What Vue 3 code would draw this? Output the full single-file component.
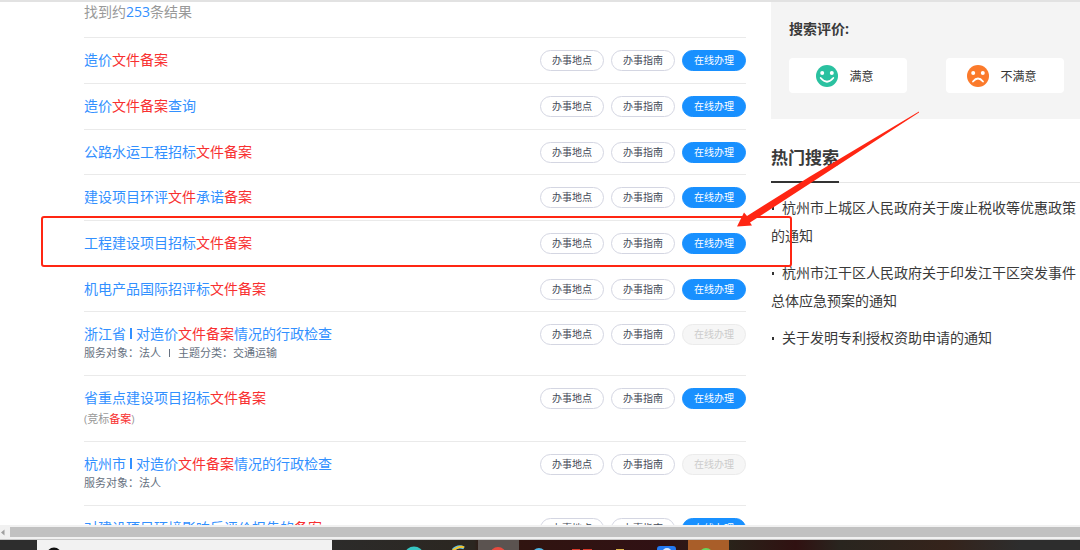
<script setup>
import { ref } from 'vue'

const mark = (text, hit = false) => ({ text, hit })

const results = [
  { title: [mark('造价'), mark('文件备案', true)], online: true },
  { title: [mark('造价'), mark('文件备案', true), mark('查询')], online: true },
  { title: [mark('公路水运工程招标'), mark('文件备案', true)], online: true },
  { title: [mark('建设项目环评'), mark('文件', true), mark('承诺'), mark('备案', true)], online: true },
  { title: [mark('工程建设项目招标'), mark('文件备案', true)], online: true, boxed: true },
  { title: [mark('机电产品国际招评标'), mark('文件备案', true)], online: true },
  {
    region: '浙江省',
    title: [mark('对造价'), mark('文件备案', true), mark('情况的行政检查')],
    meta: ['服务对象：法人', '主题分类：交通运输'],
    online: false
  },
  {
    title: [mark('省重点建设项目招标'), mark('文件备案', true)],
    alias: [mark('(竞标'), mark('备案', true), mark(')')],
    online: true
  },
  {
    region: '杭州市',
    title: [mark('对造价'), mark('文件备案', true), mark('情况的行政检查')],
    meta: ['服务对象：法人'],
    online: false
  },
  { title: [mark('对建设项目环境影响后评价报告的'), mark('备案', true)], online: true }
]

const hot = ref([
  '杭州市上城区人民政府关于废止税收等优惠政策的通知',
  '杭州市江干区人民政府关于印发江干区突发事件总体应急预案的通知',
  '关于发明专利授权资助申请的通知'
])
</script>

<template>
  <div class="page">
    <main class="content">
      <section class="results">
        <p class="count">找到约<span>253</span>条结果</p>
        <ul class="list">
          <li v-for="(r, i) in results" :key="i" :class="['row', { tall: r.meta, wide: r.alias }]">
            <div class="info">
              <a class="title" href="#">
                <template v-if="r.region">{{ r.region }}<i class="bar"></i></template><span v-for="(t, k) in r.title" :key="k" :class="{ hit: t.hit }">{{ t.text }}</span>
              </a>
              <p v-if="r.meta" class="meta">
                <template v-for="(m, k) in r.meta" :key="k"><i v-if="k" class="bar"></i>{{ m }}</template>
              </p>
              <p v-if="r.alias" class="alias"><span v-for="(t, k) in r.alias" :key="k" :class="{ hit: t.hit }">{{ t.text }}</span></p>
            </div>
            <div class="actions">
              <button type="button">办事地点</button>
              <button type="button">办事指南</button>
              <button type="button" class="online" :disabled="!r.online">在线办理</button>
            </div>
            <div v-if="r.boxed" class="highlight"></div>
          </li>
        </ul>
      </section>

      <aside class="side">
        <section class="rating">
          <h2>搜索评价:</h2>
          <div class="choices">
            <button type="button">
              <svg viewBox="0 0 22 22" aria-hidden="true">
                <circle cx="11" cy="11" r="11" fill="#2ac1a0" />
                <circle cx="6.2" cy="8" r="2" fill="#fff" />
                <circle cx="15.8" cy="8" r="2" fill="#fff" />
                <path d="M4.7 13Q11 20.5 17.3 13" fill="none" stroke="#fff" stroke-width="1.8" stroke-linecap="round" />
              </svg>
              满意
            </button>
            <button type="button">
              <svg viewBox="0 0 22 22" aria-hidden="true">
                <circle cx="11" cy="11" r="11" fill="#fb7a2b" />
                <circle cx="6.2" cy="8" r="2" fill="#fff" />
                <circle cx="15.8" cy="8" r="2" fill="#fff" />
                <path d="M6 16.500Q11 10.500 16 16.500" fill="none" stroke="#fff" stroke-width="1.8" stroke-linecap="round" />
              </svg>
              不满意
            </button>
          </div>
        </section>
        <section class="hot">
          <header><h2>热门搜索</h2></header>
          <ul>
            <li v-for="h in hot" :key="h"><a href="#">{{ h }}</a></li>
          </ul>
        </section>
      </aside>
    </main>

    <svg class="arrow" viewBox="0 0 184 116" aria-hidden="true">
      <path d="M183 0.500L74 65.500L11 105L8 101.500L1 115.500L16 114.500L14 111.500L74 72.500L183 1.500Z" fill="#ff2613" />
    </svg>

    <div class="scrollbar">
      <svg viewBox="0 0 10 11" aria-hidden="true"><path d="M4.500 2.500V8.500L1 5.500Z" fill="#a0a0a0" /></svg>
      <div class="thumb"></div>
    </div>
    <footer class="taskbar">
      <div class="searchbox">
        <svg viewBox="0 0 20 10" aria-hidden="true"><circle cx="9" cy="15" r="6" fill="none" stroke="#111" stroke-width="3" /></svg>
      </div>
      <svg class="apps" viewBox="0 0 748 10" preserveAspectRatio="xMinYMin slice" aria-hidden="true">
        <defs>
          <linearGradient id="desk">
            <stop offset="0" stop-color="#2c2b2a" />
            <stop offset=".19" stop-color="#2b2620" />
            <stop offset=".2" stop-color="#30150f" />
            <stop offset=".44" stop-color="#301114" />
            <stop offset=".53" stop-color="#29231a" />
            <stop offset=".62" stop-color="#301111" />
            <stop offset=".68" stop-color="#29251f" />
            <stop offset=".82" stop-color="#35231b" />
            <stop offset=".92" stop-color="#2d2d2d" />
          </linearGradient>
        </defs>
        <rect width="748" height="10" fill="url(#desk)" />
        <rect x="146" width="41" height="10" fill="#5b5350" />
        <rect x="356" width="41" height="10" fill="#a95e29" />
        <ellipse cx="82" cy="14" rx="9" ry="7.500" fill="#36c6c2" />
        <path d="M121 10Q126 5 132 8" fill="none" stroke="#5bc0ee" stroke-width="3" />
        <path d="M120 11Q128 5 132 7.500" fill="none" stroke="#f4c42a" stroke-width="2" />
        <circle cx="166" cy="15" r="8" fill="#e84a3e" />
        <circle cx="207" cy="15" r="7" fill="#4fb8e6" />
        <path d="M240 9.500H248M251 9.500H260" stroke="#d93a2b" stroke-width="1" />
        <path d="M284 9.500H292" stroke="#d9b34a" stroke-width="1" />
        <rect x="325" y="6" width="19" height="8" rx="3" fill="#2379f2" />
        <circle cx="335" cy="13" r="5" fill="#d9eaff" />
        <circle cx="374" cy="15" r="7" fill="#69d65c" />
      </svg>
    </footer>
  </div>
</template>

<style>
body {
  background: #fff;
}
</style>

<style scoped>
.page {
  position: relative;
  display: flex;
  flex-direction: column;
  height: 100vh;
  overflow: hidden;
  font-family: "Open Sans", "Noto Sans CJK SC", sans-serif;
  font-size: 14px;
  color: #3a3a3a;
}

h2,
p,
ul {
  margin: 0;
  padding: 0;
  font-weight: normal;
}

ul {
  list-style: none;
}

a {
  color: inherit;
  text-decoration: none;
}

button {
  padding: 0;
  border: 0;
  font-family: inherit;
  cursor: pointer;
}

.content {
  flex: 1;
  min-height: 0;
  overflow: hidden;
  display: grid;
  grid-template-columns: minmax(0, 1fr) 309px;
  gap: 25px;
  padding-left: 84px;
  border-top: 2px solid #e2e2e2;
}

.count {
  height: 35px;
  line-height: 20px;
  color: #999;
}

.count span {
  color: #3290ff;
}

.row {
  position: relative;
  display: flex;
  justify-content: space-between;
  align-items: flex-start;
  box-sizing: border-box;
  min-height: 46px;
  padding-top: 12px;
  border-top: 1px solid #eaeaea;
}

.row:nth-child(3n) {
  min-height: 45px;
}

.row.tall {
  min-height: 64px;
}

.row.wide {
  min-height: 66px;
}

.title {
  display: block;
  line-height: 20px;
  color: #3290ff;
}

.hit {
  color: #f83030;
}

.bar {
  display: inline-block;
  width: 1px;
  height: 8px;
  margin: 0 8px;
  background: currentColor;
}

.title .bar {
  width: 2px;
  height: 11px;
  margin: 0 4px;
}

.meta,
.alias {
  font-size: 11px;
  line-height: 18px;
  color: #667080;
}

.alias {
  padding-top: 2px;
  color: #999;
}

.actions {
  display: flex;
  gap: 7px;
}

.actions button {
  box-sizing: border-box;
  width: 64px;
  height: 21px;
  border: 1px solid #d4d6e2;
  border-radius: 11px;
  background: #fff;
  font-size: 10px;
  line-height: 19px;
  color: #444a58;
}

.actions .online {
  border-color: #1890ff;
  background: #1890ff;
  color: #fff;
}

.actions .online:disabled {
  border-color: #ebebeb;
  background: #f6f6f6;
  color: #ccc;
}

.highlight {
  position: absolute;
  z-index: 2;
  top: -5px;
  bottom: -1px;
  left: -43px;
  right: -46px;
  border: 2px solid #ff2613;
  border-radius: 3px;
  pointer-events: none;
}

.rating {
  box-sizing: border-box;
  height: 117px;
  padding: 16px 16px 0 18px;
  background: #f4f4f4;
}

.rating h2 {
  font-size: 14px;
  font-weight: bold;
  line-height: 21px;
}

.choices {
  display: flex;
  justify-content: space-between;
  margin-top: 19px;
}

.choices button {
  display: flex;
  align-items: center;
  justify-content: center;
  gap: 11px;
  width: 118px;
  height: 35px;
  padding-right: 6px;
  border-radius: 4px;
  background: #fff;
  font-size: 12px;
  color: #333;
}

.choices svg {
  width: 22px;
  height: 22px;
}

.hot header {
  display: flex;
  margin-top: 16px;
  border-bottom: 1px solid #e6e6e6;
}

.hot h2 {
  margin-bottom: -1px;
  border-bottom: 2px solid #333;
  font-size: 17px;
  font-weight: bold;
  line-height: 46px;
}

.hot ul {
  margin-top: 11px;
}

.hot li {
  margin-bottom: 9px;
  line-height: 28px;
}

.hot li::before {
  content: "";
  display: inline-block;
  width: 2px;
  height: 3px;
  margin: 0 8px 3px 1px;
  background: #333;
}

.arrow {
  position: absolute;
  top: 111px;
  right: 160px;
  width: 184px;
  height: 116px;
}

.scrollbar {
  display: flex;
  box-sizing: border-box;
  height: 15px;
  padding: 2px 0;
  border-bottom: 1px solid #c8c8c8;
  background: #f1f1f1;
}

.scrollbar svg {
  width: 10px;
  height: 11px;
}

.thumb {
  flex: 1;
  background: #c1c1c1;
}

.taskbar {
  display: flex;
  height: 10px;
  padding-left: 37px;
  background: #2d2d2d;
}

.searchbox {
  width: 295px;
  background: #f2f2f2;
}

.searchbox svg {
  display: block;
  width: 20px;
  height: 10px;
  margin-left: 8px;
}

.apps {
  flex: 1;
  height: 10px;
}
</style>
